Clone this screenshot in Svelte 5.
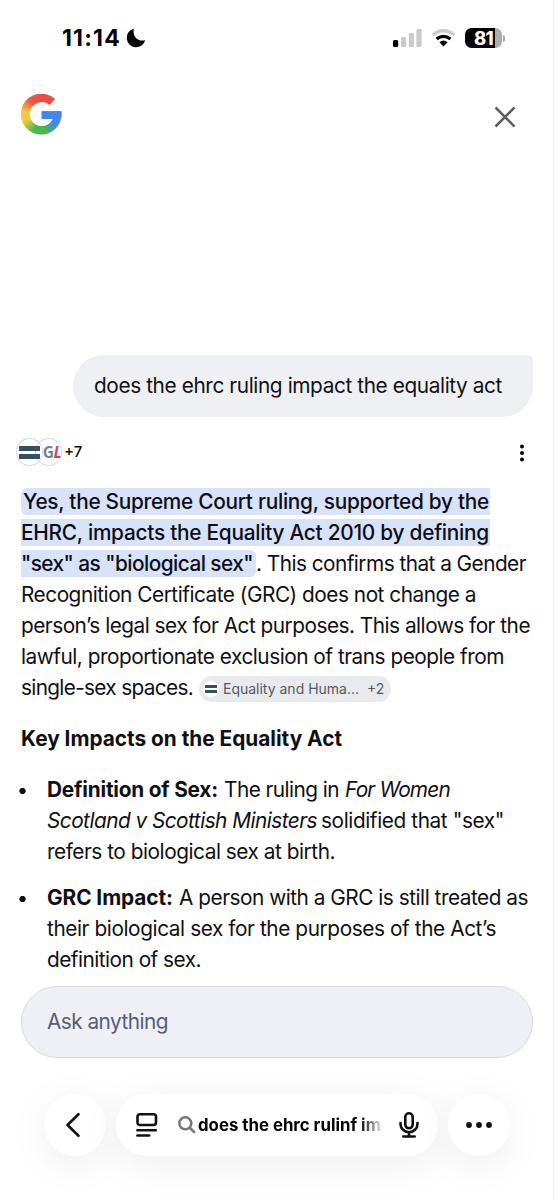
<script>
    const question = "does the ehrc ruling impact the equality act";

    // every line holds its runs of text, w is the set width of a run
    const answer = [
        [{ text: "Yes, the Supreme Court ruling, supported by the", w: 466, style: "mark first" }],
        [{ text: "EHRC, impacts the Equality Act 2010 by defining", w: 468, style: "mark" }],
        [
            { text: '"sex" as "biological sex"', w: 232, style: "mark last" },
            { text: ". This confirms that a Gender", w: 270 },
        ],
        [{ text: "Recognition Certificate (GRC) does not change a", w: 455 }],
        [{ text: "person’s legal sex for Act purposes. This allows for the", w: 509 }],
        [{ text: "lawful, proportionate exclusion of trans people from", w: 483 }],
    ];

    const impacts = [
        [
            [
                { text: "Definition of Sex:", w: 171, style: "bold" },
                { text: "The ruling in", w: 115 },
                { text: "For Women", w: 105, style: "italic" },
            ],
            [
                { text: "Scotland v Scottish Ministers", w: 270, style: "italic" },
                { text: 'solidified that "sex"', w: 183, style: "tight" },
            ],
            [{ text: "refers to biological sex at birth.", w: 288 }],
        ],
        [
            [
                { text: "GRC Impact:", w: 126, style: "bold" },
                { text: "A person with a GRC is still treated as", w: 349 },
            ],
            [{ text: "their biological sex for the purposes of the Act’s", w: 449 }],
            [{ text: "definition of sex.", w: 154 }],
        ],
    ];

    // spread the letters of a run over its width
    function fit(node, width) {
        const natural = node.getBoundingClientRect().width;
        node.style.letterSpacing = (width - natural) / node.textContent.length + "px";
    }
</script>

{#snippet run(part)}
    <span class="run {part.style ?? ''}"><span class="fit" use:fit={part.w}>{part.text}</span></span>
{/snippet}

<div class="phone">
    <div class="status">
        <span class="time"><span class="fit" use:fit={59}>11:14</span></span>
        <svg class="moon" width="20" height="20" viewBox="0 0 20 20">
            <path d="M7.8 .7A9.4 9.4 0 1 0 19.2 12.2C12.5 14.2 6 8.4 7.8 .7Z" />
        </svg>
        <svg class="signal" width="29" height="18" viewBox="0 0 29 18">
            <rect x="0" y="11" width="5.2" height="7" rx="1.5" />
            <rect class="off" x="8" y="8" width="5.2" height="10" rx="1.5" />
            <rect class="off" x="15.8" y="4" width="5.2" height="14" rx="1.5" />
            <rect class="off" x="23.4" y="0" width="5.2" height="18" rx="1.5" />
        </svg>
        <svg class="wifi" width="25" height="18" viewBox="0 0 25 18">
            <path class="arc off" d="M1.7 5.9Q12.5 -2.4 23.3 5.9" />
            <path class="arc" d="M5.6 10.1Q12.5 4.6 19.4 10.1" />
            <path d="M8.4 13.2Q12.5 10 16.6 13.2L12.5 17.5Z" />
        </svg>
        <div class="battery"><span>81</span></div>
        <div class="cap"></div>
    </div>

    <header>
        <div class="logo"></div>
        <svg width="22" height="22" viewBox="0 0 22 22">
            <path d="M1.5 1.5L20.5 20.5M20.5 1.5L1.5 20.5" />
        </svg>
    </header>

    <div class="question"><span class="fit" use:fit={408}>{question}</span></div>

    <div class="sources">
        <div class="favicon ehrc"><i></i><i></i></div>
        <div class="favicon gl"><span>G</span><em>L</em></div>
        <b>+7</b>
        <svg width="6" height="18" viewBox="0 0 6 18">
            <circle cx="3" cy="2.6" r="2" />
            <circle cx="3" cy="9" r="2" />
            <circle cx="3" cy="15.4" r="2" />
        </svg>
    </div>

    <div class="answer">
        {#each answer as line}
            <div class="line joined">
                {#each line as part}{@render run(part)}{/each}
            </div>
        {/each}
        <div class="line">
            {@render run({ text: "single-sex spaces.", w: 172 })}
            <div class="chip">
                <div class="dot"><i></i><i></i></div>
                <span class="fit" use:fit={136}>Equality and Huma...</span>
                <span class="more">+2</span>
            </div>
        </div>
    </div>

    <h2><span class="fit" use:fit={321}>Key Impacts on the Equality Act</span></h2>

    <ul>
        {#each impacts as item}
            <li>
                {#each item as line}
                    <div class="line">
                        {#each line as part}{@render run(part)}{/each}
                    </div>
                {/each}
            </li>
        {/each}
    </ul>

    <div class="ask"><span class="fit" use:fit={121}>Ask anything</span></div>

    <nav>
        <div class="round">
            <svg width="16" height="26" viewBox="0 0 16 26">
                <path d="M13.5 2.2L2.5 13L13.5 23.8" />
            </svg>
        </div>
        <div class="address">
            <svg width="22" height="26" viewBox="0 0 22 26">
                <rect x="1.5" y="2.2" width="18.5" height="10.8" rx="2.4" />
                <path d="M1.4 18.3H19.8M1.4 23.5H13.2" />
            </svg>
            <svg class="search" width="18" height="18" viewBox="0 0 18 18">
                <circle cx="7.3" cy="7.3" r="6" />
                <path d="M12 12L16.2 16.2" />
            </svg>
            <div class="query"><span class="fit" use:fit={183}>does the ehrc rulinf im</span></div>
            <svg class="mic" width="20" height="26" viewBox="0 0 20 26">
                <rect x="6.3" y="1.3" width="7.4" height="15" rx="3.7" />
                <path d="M1.5 11V12A8.5 8.2 0 0 0 18.5 12V11M10 20.3V24.3M4.3 24.5H15.7" />
            </svg>
        </div>
        <div class="round">
            <svg class="dots" width="28" height="8" viewBox="0 0 28 8">
                <circle cx="4" cy="4" r="2.9" />
                <circle cx="14" cy="4" r="2.9" />
                <circle cx="24" cy="4" r="2.9" />
            </svg>
        </div>
    </nav>
</div>

<style>
    :global(body) {
        background: #fff;
    }
    .phone {
        box-sizing: border-box;
        width: 554px;
        height: 1200px;
        overflow: hidden;
        border-right: 1px solid #ececee;
        background: #fff;
        color: #0f1014;
        font-family: Inter, sans-serif;
        font-size: 20.8px;
        line-height: 31px;
    }
    .fit {
        display: inline-block;
        white-space: nowrap;
    }
    svg {
        display: block;
        flex: none;
    }

    .status {
        display: flex;
        align-items: center;
        height: 76px;
        padding-left: 62px;
        color: #000;
    }
    .time {
        width: 64px;
        font-size: 23px;
        font-weight: 700;
    }
    .moon {
        margin-right: 247px;
    }
    .signal {
        margin-right: 9px;
    }
    .wifi {
        margin-right: 9px;
    }
    .arc {
        fill: none;
        stroke: #000;
        stroke-width: 3.2;
    }
    .off {
        fill: #cbcbcb;
    }
    .arc.off {
        fill: none;
        stroke: #cbcbcb;
    }
    .battery {
        width: 37px;
        height: 20px;
        border-radius: 6.5px;
        background: linear-gradient(90deg, #000 30px, #adadad 30px);
        color: #fff;
        font-size: 18.5px;
        font-weight: 800;
        line-height: 20px;
        letter-spacing: -0.8px;
        text-align: center;
    }
    .cap {
        width: 2px;
        height: 7px;
        margin-left: 1px;
        border-radius: 0 3px 3px 0;
        background: #adadad;
    }

    header {
        display: flex;
        justify-content: space-between;
        height: 262px;
        padding: 18px 37px 0 21px;
    }
    .logo {
        width: 41px;
        height: 41px;
        background:
            linear-gradient(#4285f4, #4285f4) 20px 17px / 21px 8.2px no-repeat,
            conic-gradient(#ea4d44 0 45deg, #4285f4 60deg 120deg, #449bb0 140deg, #4bb553 165deg 205deg, #8fc34a 225deg, #f2cb3c 250deg 280deg, #f29a40 298deg, #ea5545 322deg, #ea4d44);
        clip-path: path("M34.1 5.1A20.4 20.5 0 1 0 40.4 17.3H20.7V25H31.7A12 12 0 1 1 28.6 11Z");
    }
    header svg {
        margin-top: 12px;
        fill: none;
        stroke: #5c5e62;
        stroke-width: 2.5;
    }

    .question {
        box-sizing: border-box;
        width: 460px;
        height: 62px;
        margin: -1px 0 0 73px;
        padding: 15px 0 0 21px;
        border-radius: 31px 5px 31px 31px;
        background: #eff0f4;
    }

    .sources {
        display: flex;
        align-items: center;
        height: 28px;
        margin-top: 21px;
        padding: 0 28px 0 16px;
    }
    .favicon {
        box-sizing: border-box;
        display: flex;
        width: 27px;
        height: 28px;
        border: 1px solid #d3dcf2;
        border-radius: 50%;
        background: #fff;
    }
    .ehrc {
        flex-direction: column;
        align-items: center;
        justify-content: center;
        gap: 3px;
        z-index: 1;
        background: none;
    }
    .ehrc i {
        width: 21px;
        height: 5px;
        background: #34505c;
    }
    .gl {
        align-items: center;
        justify-content: flex-end;
        margin-left: -8px;
        color: #6a8590;
        font: 700 15.5px/20px "Open Sans", sans-serif;
        letter-spacing: -0.5px;
    }
    .gl em {
        color: #c44b5f;
    }
    .sources b {
        margin-left: 2px;
        font-size: 15px;
        font-weight: 500;
        line-height: 20px;
    }
    .sources svg {
        margin: 2px 0 0 auto;
    }

    .answer {
        margin: 20px 0 0 21px;
    }
    .line {
        display: flex;
        align-items: center;
        gap: 6px;
        height: 31px;
    }
    .joined {
        gap: 0;
    }
    .mark {
        height: 27px;
        padding-right: 1px;
        background: #d8e2f9;
        color: #0b0e18;
        font-weight: 500;
        line-height: 27px;
    }
    .first {
        padding: 0 1px 0 2px;
        border-radius: 6px 0 0 6px;
    }
    .last {
        padding-right: 3px;
        border-radius: 0 6px 6px 0;
    }
    .bold {
        font-weight: 650;
    }
    .italic {
        font-style: italic;
    }
    .tight {
        margin-left: -2px;
    }
    .chip {
        display: flex;
        align-items: center;
        height: 26px;
        padding: 0 7px 0 4px;
        margin-top: 3px;
        border-radius: 13px;
        background: #e9eaee;
        color: #56595f;
        font-size: 14px;
        line-height: 26px;
    }
    .dot {
        display: flex;
        flex-direction: column;
        align-items: center;
        justify-content: center;
        gap: 2px;
        width: 16px;
        height: 16px;
        margin-right: 4px;
        border-radius: 50%;
        background: #fff;
    }
    .dot i {
        width: 12px;
        height: 3px;
        background: #34505c;
    }
    .more {
        margin-left: 8px;
    }

    h2 {
        margin: 20px 0 0 21px;
        font-size: 20.8px;
        font-weight: 650;
        line-height: 31px;
    }
    ul {
        margin: 20px 0 0;
        padding: 0;
        list-style: none;
    }
    li {
        padding-left: 47px;
        margin-bottom: 15px;
        background: radial-gradient(circle at 22.5px 17px, #0f1014 2.8px, transparent 3.5px);
    }
    li:last-child {
        margin-bottom: 0;
    }

    .ask {
        box-sizing: border-box;
        width: 512px;
        height: 72px;
        margin: 11px 0 0 21px;
        padding-left: 25px;
        border: 1px solid #d9dbe3;
        border-radius: 36px;
        background: #eff0f5;
        color: #575c7a;
        line-height: 69px;
    }

    nav {
        display: flex;
        gap: 10px;
        margin: 36px 0 0 44px;
    }
    .round,
    .address {
        display: flex;
        align-items: center;
        height: 62px;
        border-radius: 31px;
        background: #fff;
        box-shadow: 0 8px 40px rgba(0, 0, 0, 0.07);
    }
    .round {
        justify-content: center;
        width: 62px;
    }
    .round svg {
        margin-right: 4px;
    }
    nav svg {
        fill: none;
        stroke: #111;
        stroke-width: 2.6;
        stroke-linecap: round;
        stroke-linejoin: round;
    }
    .round .dots {
        margin: 0;
        fill: #111;
        stroke: none;
    }
    .address {
        box-sizing: border-box;
        width: 322px;
        padding-left: 20px;
    }
    nav .search {
        margin-left: 20px;
        stroke: #77777a;
        stroke-width: 2.5;
    }
    .query {
        width: 182px;
        margin-left: 2px;
        overflow: hidden;
        color: #000;
        font-size: 16.8px;
        font-weight: 650;
        line-height: 24px;
        mask-image: linear-gradient(90deg, #000 162px, transparent 186px);
    }
    .mic {
        margin-left: 19px;
    }
</style>
